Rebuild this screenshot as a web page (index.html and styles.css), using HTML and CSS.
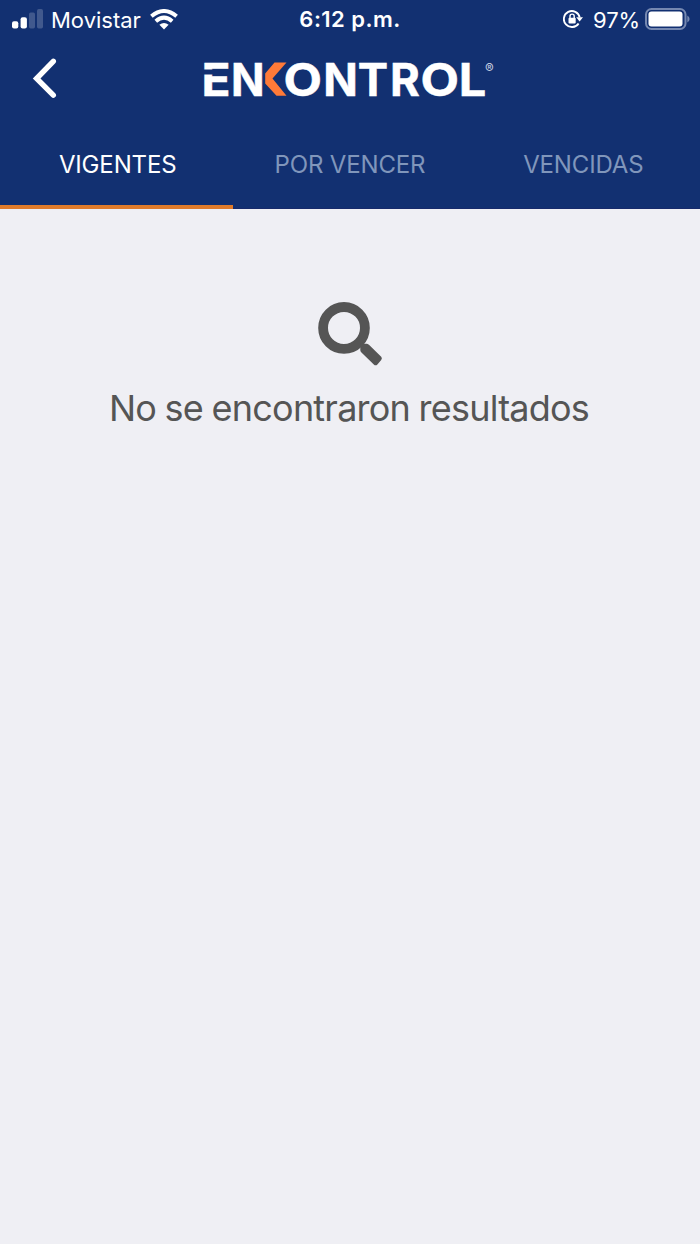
FILE: index.html
```html
<!DOCTYPE html>
<html lang="es">
<head>
<meta charset="utf-8">
<title>Enkontrol</title>
<link rel="stylesheet" href="styles.css">
</head>
<body>
<div class="app">
  <header class="header">
    <div class="status">
      <div class="status-left">
        <svg class="signal" width="32" height="20" viewBox="0 0 32 20" fill="#fff">
          <rect x="0" y="12.3" width="6.3" height="7.2" rx="2"/>
          <rect x="8.6" y="8.3" width="6.3" height="11.2" rx="2"/>
          <rect class="dim" x="17" y="3.5" width="6" height="16" rx="1.7"/>
          <rect class="dim" x="25" y="0" width="6" height="19.5" rx="1.7"/>
        </svg>
        <span class="carrier">Movistar</span>
        <svg class="wifi" width="28" height="21" viewBox="0 0 28 21">
          <g fill="none" stroke="#fff" stroke-width="4">
            <path d="M1.4 7.3 Q14-3.2 26.6 7.3"/>
            <path d="M5.8 12.2 Q14 5.2 22.2 12.2"/>
          </g>
          <path d="M9.4 15.8 Q14 12 18.6 15.8 L14 20.6Z" fill="#fff"/>
        </svg>
      </div>
      <span class="time">6:12 p.m.</span>
      <div class="status-right">
        <svg class="lock" width="20" height="20" viewBox="0 0 20 20">
          <path d="M15.6 14.4 A8 8 0 1 1 16.7 8.4" fill="none" stroke="#fff" stroke-width="1.9"/>
          <path d="M13.2 8.2 H20 L16.6 12.6Z" fill="#fff"/>
          <rect x="5.5" y="8.7" width="7.2" height="5.8" rx="1" fill="#fff"/>
          <path d="M7 9 V7.2 a2.1 2.1 0 0 1 4.2 0 V9" fill="none" stroke="#fff" stroke-width="1.4"/>
        </svg>
        <span class="percent">97%</span>
        <svg class="battery" width="45" height="22" viewBox="0 0 45 22">
          <rect x="1" y="1" width="39.5" height="20" rx="5.5" fill="none" stroke="#7588b1" stroke-width="2"/>
          <rect x="3.5" y="3.5" width="34" height="15" rx="3" fill="#fff"/>
          <path d="M42.3 7.5 Q44.6 8.7 44.6 11 T42.3 14.5Z" fill="#7588b1"/>
        </svg>
      </div>
    </div>
    <div class="titlebar">
      <svg class="back" width="26" height="42" viewBox="0 0 26 42">
        <path d="M21.3 3.3 L4.6 20.5 L21.3 37.2" fill="none" stroke="#fff" stroke-width="5.4" stroke-linecap="round" stroke-linejoin="miter"/>
      </svg>
      <svg class="logo" width="296" height="42" viewBox="0 0 296 42">
        <text class="wordmark" y="37.5" x="-1.6" textLength="29" lengthAdjust="spacingAndGlyphs">E</text>
        <path class="slit" d="M-1 14 H10"/>
        <text class="wordmark" y="37.5" x="28" textLength="33.6" lengthAdjust="spacingAndGlyphs">N</text>
        <path d="M71.5 4.5 H83.5 L69.5 20.6 L83.5 37.7 H73.5 L62.2 25.6 V15.5Z" fill="#ff7a38"/>
        <text class="wordmark" y="37.5" x="80.4" textLength="38.5" lengthAdjust="spacingAndGlyphs">O</text>
        <text class="wordmark" y="37.5" x="120.3">N</text>
        <text class="wordmark" y="37.5" x="154.7">T</text>
        <text class="wordmark" y="37.5" x="187">R</text>
        <text class="wordmark" y="37.5" x="217.4" textLength="38.5" lengthAdjust="spacingAndGlyphs">O</text>
        <text class="wordmark" y="37.5" x="255.8" textLength="27.5" lengthAdjust="spacingAndGlyphs">L</text>
        <text class="registered" x="282" y="15.2">®</text>
      </svg>
    </div>
    <nav class="tabs">
      <a class="tab active"><span class="t1">VIGENTES</span></a>
      <a class="tab"><span class="t2">POR VENCER</span></a>
      <a class="tab"><span class="t3">VENCIDAS</span></a>
    </nav>
  </header>
  <main class="empty">
    <svg class="search" width="66" height="66" viewBox="0 0 66 66">
      <circle cx="27" cy="26.9" r="20.9" fill="none" stroke="#555" stroke-width="9.8"/>
      <path d="M43.3 47 L44 41 L47 42.8 H50 Q51.2 43 52.2 44 L64.2 55.8 Q65.6 57.4 64.2 59 L60.4 63.4 Q58.6 65.2 56.8 63.4 L44.2 51.2 Q43.3 50.3 43.3 49Z" fill="#555"/>
    </svg>
    <p class="message">No se encontraron resultados</p>
  </main>
</div>
</body>
</html>
```
FILE: styles.css
```css
* { box-sizing: border-box; }
body { margin: 0; background: #efeff4; font-family: Inter, "Liberation Sans", sans-serif; }
.app { width: 700px; height: 1244px; display: flex; flex-direction: column; }
.header { height: 209px; background: #123071; color: #fff; display: flex; flex-direction: column; }
.status { height: 40px; display: grid; grid-template-columns: 1fr auto 1fr; align-items: center; padding: 0 10px 0 12px; font-size: 22px; line-height: 38px; }
.status-left, .status-right { display: flex; align-items: center; height: 38px; }
.status-right { justify-content: flex-end; }
.signal { margin: -3px 7px 0 0; }
.carrier { letter-spacing: 0; }
.dim { opacity: .2; }
.wifi { margin: -2px 0 0 9px; }
.time { font-weight: 600; height: 38px; margin: -2px 0 0 -2px; letter-spacing: .45px; }
.lock { margin: -2px 10px 0 0; }
.percent { letter-spacing: -.1px; margin-right: 5px; }
.battery { margin-top: -3px; }
.titlebar { height: 80px; display: flex; padding: 18px 0 0 32px; }
.logo { margin-left: 145px; overflow: visible; }
.wordmark { font-size: 45.4px; font-weight: 700; fill: #fff; stroke: #fff; stroke-width: .5px; }
.slit { stroke: #123071; stroke-width: 5px; }
.registered { font-size: 13px; fill: #c5cee0; }
.tabs { display: grid; grid-template-columns: repeat(3, 1fr); flex: 1; }
.tab { display: flex; justify-content: center; padding-top: 30px; font-size: 24px; line-height: 29px; color: #8096bb; white-space: nowrap; letter-spacing: -.15px; border-bottom: 1px solid #172a6b; }
.active { color: #fff; border-bottom: 4px solid #e07b2b; }
.t1 { margin-left: 2px; }
.empty { display: flex; flex-direction: column; align-items: center; padding-top: 92px; }
.message { margin: 18px 2px 0 0; font-size: 36px; line-height: 46px; letter-spacing: -.78px; word-spacing: -.8px; color: #555; white-space: nowrap; }
```
